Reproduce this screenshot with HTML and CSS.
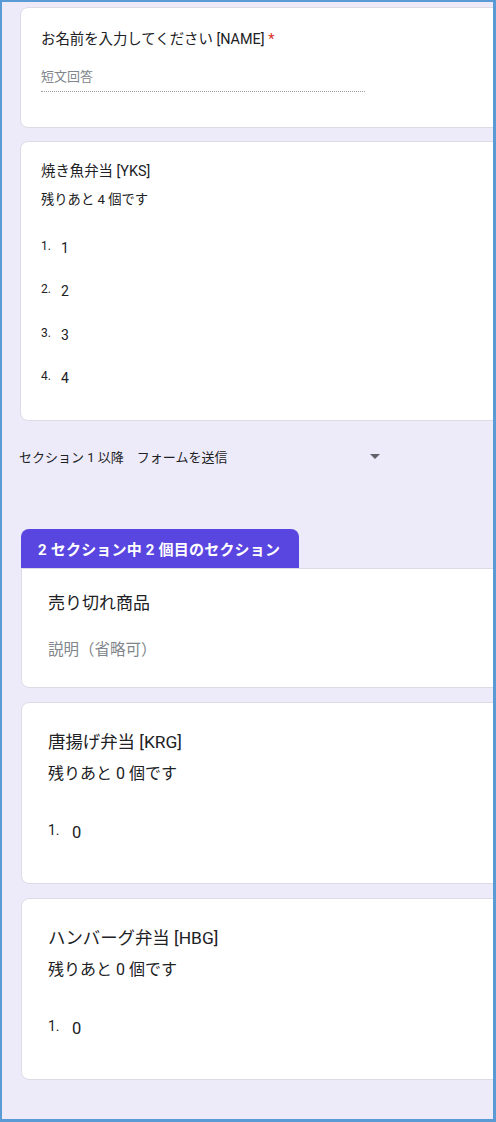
FILE: index.html
```html
<!DOCTYPE html>
<html lang="ja">
<head>
<meta charset="utf-8">
<title>フォーム</title>
<link rel="stylesheet" href="styles.css">
</head>
<body>
<div class="frame">
  <div class="card card-q1">
    <div class="q-title">お名前を入力してください [NAME] <span class="req">*</span></div>
    <div class="short-field">短文回答</div>
  </div>

  <div class="card card-q2">
    <div class="q-title">焼き魚弁当 [YKS]</div>
    <div class="q-sub">残りあと 4 個です</div>
    <ol class="opts">
      <li><span class="num">1.</span><span class="val">1</span></li>
      <li><span class="num">2.</span><span class="val">2</span></li>
      <li><span class="num">3.</span><span class="val">3</span></li>
      <li><span class="num">4.</span><span class="val">4</span></li>
    </ol>
  </div>

  <div class="nav">
    <span class="nav-label">セクション 1 以降</span>
    <div class="nav-select">
      <span>フォームを送信</span>
      <span class="arrow"></span>
    </div>
  </div>

  <div class="section2">
    <div class="tab">2 セクション中 2 個目のセクション</div>
    <div class="card card-head">
      <div class="s-title">売り切れ商品</div>
      <div class="s-desc">説明（省略可）</div>
    </div>

    <div class="card card-big">
      <div class="b-title">唐揚げ弁当 [KRG]</div>
      <div class="b-sub">残りあと 0 個です</div>
      <div class="b-item"><span class="num">1.</span><span class="val">0</span></div>
    </div>

    <div class="card card-big">
      <div class="b-title">ハンバーグ弁当 [HBG]</div>
      <div class="b-sub">残りあと 0 個です</div>
      <div class="b-item"><span class="num">1.</span><span class="val">0</span></div>
    </div>
  </div>
</div>
</body>
</html>
```

FILE: styles.css
```css
* { box-sizing: border-box; }
html, body { margin: 0; padding: 0; }
body {
  font-family: Roboto, "Noto Sans CJK JP", "Noto Sans", sans-serif;
  color: #202124;
}
.frame {
  width: 496px;
  height: 1122px;
  border-style: solid;
  border-color: #5b9bd5;
  border-width: 2px 3px 3px 2px;
  background: #edebfa;
  overflow: hidden;
  padding: 5px 0 0 18px;
}
.card {
  background: #fff;
  border: 1px solid #dcdbe6;
  border-radius: 8px;
  margin-right: -24px;
}
.card-q1 {
  padding: 22px 24px 35px 20px;
}
.q-title {
  font-size: 14.4px;
  line-height: 20px;
}
.req { color: #d93025; }
.short-field {
  margin-top: 17px;
  width: 324px;
  font-size: 13px;
  line-height: 20px;
  color: #80868b;
  padding-bottom: 4px;
  border-bottom: 1px dotted #9aa0a6;
}
.card-q2 {
  margin-top: 13px;
  padding: 20px 24px 20px 20px;
}
.q-sub {
  margin-top: 8px;
  font-size: 13.3px;
  line-height: 20px;
}
.opts {
  list-style: none;
  margin: 16px 0 0;
  padding: 0;
}
.opts li {
  display: flex;
  align-items: center;
  height: 43.5px;
}
.num {
  font-size: 12px;
  width: 20px;
  position: relative;
  top: -2px;
}
.val { font-size: 14px; }
.nav {
  margin: 25px 0 0 -1px;
  display: flex;
  align-items: center;
  height: 20px;
  font-size: 13px;
  gap: 13px;
}
.nav-select {
  display: flex;
  align-items: center;
  justify-content: space-between;
  width: 243px;
}
.arrow {
  width: 0;
  height: 0;
  border-left: 5px solid transparent;
  border-right: 5px solid transparent;
  border-top: 5px solid #5f6368;
}
.section2 {
  margin-top: 63px;
  padding-left: 1px;
}
.tab {
  width: 278px;
  height: 39px;
  background: #5945e0;
  color: #fff;
  border-radius: 8px 8px 0 0;
  font-size: 15px;
  font-weight: 700;
  display: flex;
  align-items: center;
  padding-left: 17px;
  letter-spacing: 0.2px;
}
.card-head {
  border-top-left-radius: 0;
  padding: 22px 24px 25px 26px;
}
.s-title {
  font-size: 17px;
  line-height: 24px;
}
.s-desc {
  margin-top: 23px;
  font-size: 15.5px;
  line-height: 24px;
  color: #80868b;
}
.card-big {
  margin-top: 14px;
  padding: 27px 24px 31px 26px;
}
.b-title {
  font-size: 17.4px;
  line-height: 24px;
}
.b-sub {
  margin-top: 8px;
  font-size: 16px;
  line-height: 24px;
}
.b-item {
  margin-top: 26px;
  height: 40px;
  display: flex;
  align-items: center;
}
.b-item .num {
  font-size: 14px;
  width: 24px;
  top: -2px;
}
.b-item .val { font-size: 16.5px; }
```
